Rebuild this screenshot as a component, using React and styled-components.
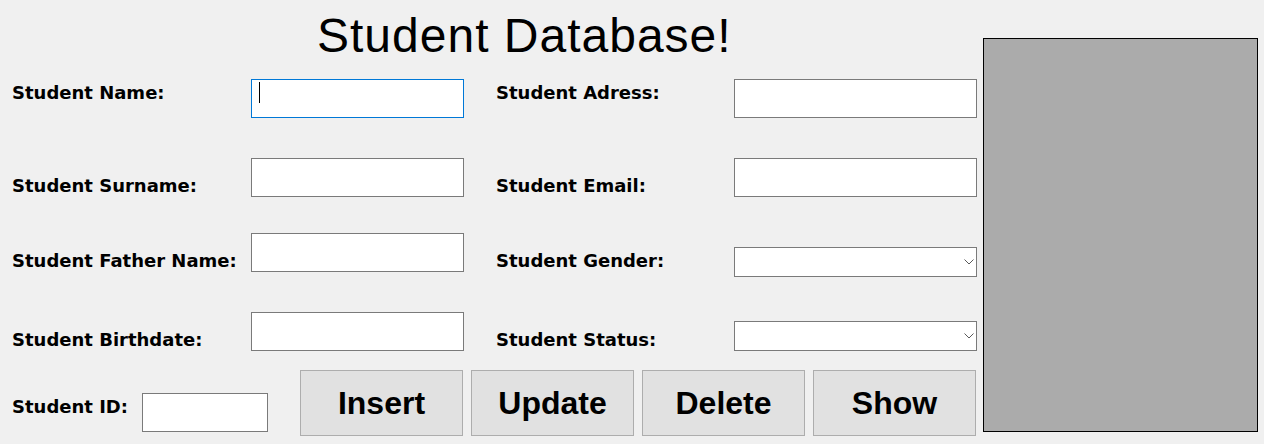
import styled, { createGlobalStyle } from "styled-components";

const GlobalStyle = createGlobalStyle`
  html, body {
    margin: 0;
    padding: 0;
    background: #f0f0f0;
  }
  body {
    width: 1264px;
    height: 444px;
    overflow: hidden;
  }
`;

function Chevron() {
  return (
    <svg width="10" height="6" viewBox="0 0 10 6">
      <path d="M0.5 0.5 L5 5 L9.5 0.5" fill="none" stroke="#5a5a5a" strokeWidth="1" />
    </svg>
  );
}

function ComboBox({ top }) {
  return (
    <ComboWrap $top={top}>
      <Select defaultValue="">
        <option value=""></option>
      </Select>
      <ChevronSlot>
        <Chevron />
      </ChevronSlot>
    </ComboWrap>
  );
}

function App() {
  return (
    <>
      <GlobalStyle />
      <Window>
        <Form>
          <Title>Student Database!</Title>

          <FieldRow $mt={16}>
            <Label $top={3}>Student Name:</Label>
            <FocusWrap>
              <TextBox $focused />
            </FocusWrap>
            <Label $top={3} $indent>Student Adress:</Label>
            <TextBox />
          </FieldRow>

          <FieldRow $mt={40}>
            <Label $top={17}>Student Surname:</Label>
            <TextBox />
            <Label $top={17} $indent>Student Email:</Label>
            <TextBox />
          </FieldRow>

          <FieldRow $mt={36}>
            <Label $top={17}>Student Father Name:</Label>
            <TextBox />
            <Label $top={17} $indent>Student Gender:</Label>
            <ComboBox top={14} />
          </FieldRow>

          <FieldRow $mt={35}>
            <Label $top={17}>Student Birthdate:</Label>
            <TextBox />
            <Label $top={17} $indent>Student Status:</Label>
            <ComboBox top={9} />
          </FieldRow>

          <BottomRow>
            <IdLabel>Student ID:</IdLabel>
            <IdBox />
            <ButtonGroup>
              <ActionButton>Insert</ActionButton>
              <ActionButton>Update</ActionButton>
              <ActionButton>Delete</ActionButton>
              <ActionButton>Show</ActionButton>
            </ButtonGroup>
          </BottomRow>
        </Form>

        <ImagePanel />
      </Window>
    </>
  );
}

const Window = styled.div`
  display: flex;
  align-items: flex-start;
  width: 1264px;
  height: 444px;
  background: #f0f0f0;
`;

const Form = styled.div`
  display: flex;
  flex-direction: column;
  width: 977px;
  padding-top: 8px;
`;

const Title = styled.h1`
  margin: 0 0 0 317px;
  font-family: "Liberation Sans", Arial, sans-serif;
  font-weight: 400;
  font-size: 48px;
  letter-spacing: 1px;
  line-height: 55px;
  height: 55px;
  color: #000;
`;

const FieldRow = styled.div`
  display: grid;
  grid-template-columns: 239px 213px 270px 243px;
  align-items: start;
  padding-left: 12px;
  margin-top: ${(p) => p.$mt}px;
`;

const Label = styled.label`
  display: block;
  margin-top: ${(p) => p.$top || 0}px;
  padding-left: ${(p) => (p.$indent ? 32 : 0)}px;
  font-family: "DejaVu Sans", Verdana, sans-serif;
  font-weight: 700;
  font-size: 18px;
  line-height: 21px;
  color: #000;
  white-space: nowrap;
`;

const TextBox = styled.input.attrs({ type: "text" })`
  box-sizing: border-box;
  display: block;
  width: 100%;
  height: 39px;
  margin: 0;
  padding: 0 6px;
  background: #fff;
  border: 1px solid ${(p) => (p.$focused ? "#0078d7" : "#7a7a7a")};
  border-radius: 0;
  outline: none;
  font-family: "Liberation Sans", Arial, sans-serif;
  font-size: 16px;
`;

const FocusWrap = styled.div`
  position: relative;

  &::after {
    content: "";
    position: absolute;
    left: 8px;
    top: 3px;
    width: 1px;
    height: 21px;
    background: #000;
  }
`;

const ComboWrap = styled.div`
  position: relative;
  margin-top: ${(p) => p.$top}px;
`;

const Select = styled.select`
  box-sizing: border-box;
  display: block;
  width: 100%;
  height: 30px;
  margin: 0;
  padding: 0 20px 0 4px;
  background: #fff;
  border: 1px solid #7a7a7a;
  border-radius: 0;
  appearance: none;
  outline: none;
  font-family: "Liberation Sans", Arial, sans-serif;
  font-size: 14px;
`;

const ChevronSlot = styled.span`
  position: absolute;
  right: 3px;
  top: 12px;
  display: flex;
  pointer-events: none;
`;

const BottomRow = styled.div`
  display: flex;
  align-items: flex-start;
  padding-left: 12px;
  margin-top: 19px;
`;

const IdLabel = styled(Label)`
  width: 130px;
  margin-top: 26px;
`;

const IdBox = styled(TextBox)`
  width: 126px;
  margin-top: 23px;
`;

const ButtonGroup = styled.div`
  display: flex;
  gap: 8px;
  margin-left: 32px;
`;

const ActionButton = styled.button`
  box-sizing: border-box;
  width: 163px;
  height: 66px;
  margin: 0;
  padding: 0;
  background: #e1e1e1;
  border: 1px solid #adadad;
  border-radius: 0;
  font-family: "Liberation Sans", Arial, sans-serif;
  font-weight: 700;
  font-size: 32px;
  color: #000;
  cursor: pointer;
`;

const ImagePanel = styled.div`
  box-sizing: border-box;
  width: 275px;
  height: 394px;
  margin: 38px 0 0 6px;
  background: #ababab;
  border: 1px solid #000;
`;

export default App;
